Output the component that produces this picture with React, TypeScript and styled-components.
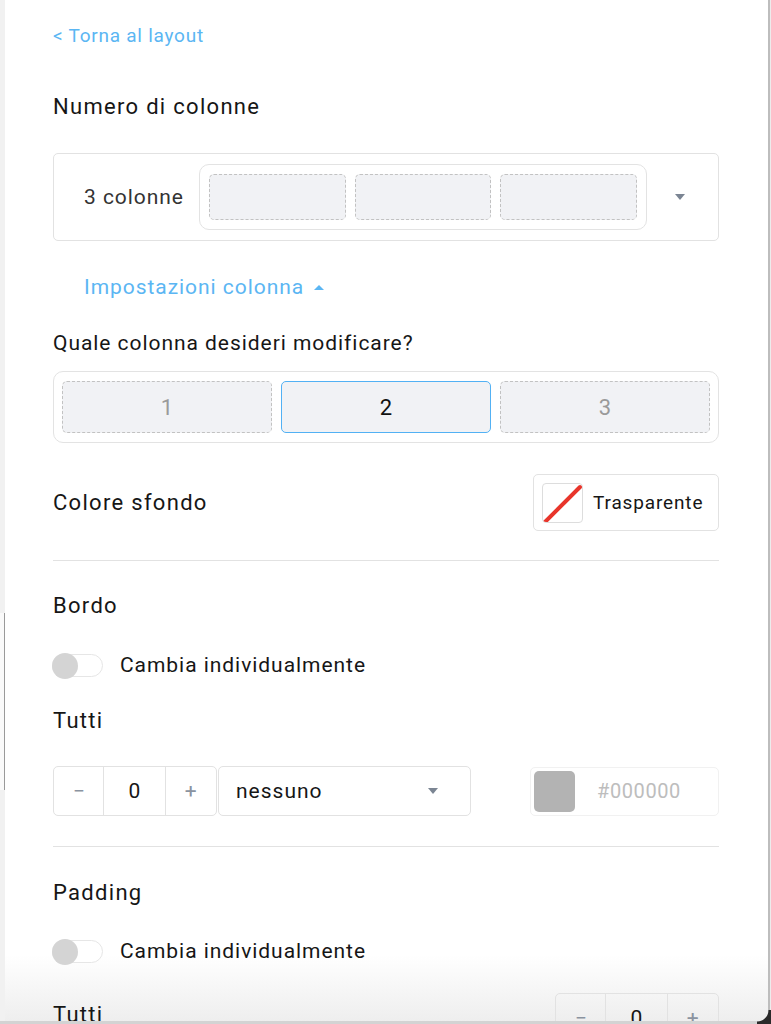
import React from "react";
import styled, { createGlobalStyle } from "styled-components";

const Global = createGlobalStyle`
  html, body { margin: 0; padding: 0; background: #ffffff; }
  body { font-family: Roboto, "Noto Sans", Arial, sans-serif; color: #1b1b1b; overflow: hidden; }
  * { box-sizing: border-box; }
`;

const Screen = styled.div`
  position: relative;
  display: flex;
  width: 771px;
  height: 1024px;
  overflow: hidden;
  background: linear-gradient(to bottom, #ffffff 0px, #ffffff 955px, #eeeeee 1021px);
`;

const LeftStrip = styled.div`
  width: 5px;
  flex-shrink: 0;
  display: flex;
  flex-direction: column;
  background: #f1f1f1;
`;

const LeftBehind = styled.div`
  margin-top: 613px;
  height: 177px;
  border-right: 1px solid #9a9a9a;
  background: #fafafa;
`;

const RightEdge = styled.div`
  width: 3px;
  flex-shrink: 0;
  border-left: 2px solid #bdbdbd;
  background: #ececec;
`;

const Panel = styled.div`
  flex: 1;
  display: flex;
  flex-direction: column;
  padding: 0 49px 0 48px;
  & > * { flex-shrink: 0; }
`;

const BackLink = styled.a`
  margin-top: 24px;
  line-height: 24px;
  font-size: 19px;
  letter-spacing: 0.75px;
  color: #5bb6f3;
  text-decoration: none;
`;

const Heading = styled.div<{ $mt: number }>`
  margin-top: ${(p) => p.$mt}px;
  line-height: 24px;
  font-size: 22px;
  letter-spacing: 1.3px;
  color: #161616;
`;

const Label = styled.div<{ $mt: number }>`
  margin-top: ${(p) => p.$mt}px;
  line-height: 24px;
  font-size: 21px;
  letter-spacing: 0.95px;
  color: #161616;
`;

const ColumnsBox = styled.div`
  margin-top: 34px;
  height: 88px;
  border: 1px solid #e2e2e2;
  border-radius: 5px;
  display: flex;
  align-items: center;
  padding-left: 30px;
`;

const ColumnsLabel = styled.span`
  width: 115px;
  font-size: 21px;
  letter-spacing: 0.95px;
  color: #333;
`;

const Preview = styled.div`
  width: 448px;
  height: 66px;
  border: 1px solid #e3e3e3;
  border-radius: 10px;
  padding: 9px;
  display: flex;
  gap: 9px;
`;

const PreviewCell = styled.div`
  flex: 1;
  border: 1px dashed #c2c2c2;
  border-radius: 5px;
  background: #f1f2f5;
`;

const Caret = styled.span<{ $up?: boolean; $ml?: number }>`
  display: inline-block;
  margin-left: ${(p) => p.$ml ?? 0}px;
  width: 0;
  height: 0;
  border-left: 5px solid transparent;
  border-right: 5px solid transparent;
  ${(p) =>
    p.$up
      ? "border-bottom: 5px solid currentColor;"
      : "border-top: 6px solid #7b8593;"}
`;

const ToggleLink = styled.div`
  margin-top: 34px;
  margin-left: 31px;
  line-height: 24px;
  font-size: 21px;
  letter-spacing: 0.95px;
  color: #5bb6f3;
  display: flex;
  align-items: center;
  gap: 10px;
`;

const Group = styled.div`
  margin-top: 16px;
  height: 72px;
  border: 1px solid #e3e3e3;
  border-radius: 10px;
  padding: 9px 8px;
  display: flex;
  gap: 9px;
`;

const ColButton = styled.div<{ $active?: boolean }>`
  flex: 1;
  display: flex;
  align-items: center;
  justify-content: center;
  border-radius: 5px;
  background: #f1f2f5;
  font-size: 22px;
  border: 1px ${(p) => (p.$active ? "solid #52b1f4" : "dashed #c2c2c2")};
  color: ${(p) => (p.$active ? "#111" : "#9a9a9a")};
`;

const Row = styled.div<{ $mt: number }>`
  margin-top: ${(p) => p.$mt}px;
  display: flex;
  align-items: center;
  justify-content: space-between;
`;

const TopRow = styled(Row)`
  align-items: flex-start;
`;

const ColorButton = styled.div`
  width: 186px;
  height: 57px;
  border: 1px solid #e2e2e2;
  border-radius: 5px;
  display: flex;
  align-items: center;
  padding-left: 8px;
  gap: 10px;
  font-size: 19px;
  letter-spacing: 0.85px;
  color: #161616;
`;

const Swatch = styled.div`
  width: 41px;
  height: 40px;
  border: 1px solid #dddddd;
  border-radius: 4px;
  overflow: hidden;
`;

const Divider = styled.div<{ $mt: number }>`
  margin-top: ${(p) => p.$mt}px;
  height: 1px;
  background: #e2e2e2;
`;

const SwitchRow = styled.div<{ $mt: number }>`
  margin-top: ${(p) => p.$mt}px;
  display: flex;
  align-items: center;
  gap: 17px;
  height: 26px;
  font-size: 21px;
  letter-spacing: 0.95px;
  color: #161616;
`;

const Track = styled.div`
  position: relative;
  width: 51px;
  height: 23px;
  border: 1px solid #e6e6e6;
  border-radius: 12px;
  background: #fff;
  margin-left: -1px;
`;

const Knob = styled.div`
  position: absolute;
  left: -1px;
  top: -2px;
  width: 26px;
  height: 26px;
  border-radius: 50%;
  background: #d4d4d4;
`;

const Controls = styled.div`
  margin-top: 33px;
  display: flex;
  align-items: center;
  height: 50px;
`;

const Stepper = styled.div`
  display: flex;
  width: 164px;
  height: 50px;
  border: 1px solid #e2e2e2;
  border-radius: 5px;
`;

const StepBtn = styled.div<{ $w: number; $last?: boolean }>`
  width: ${(p) => p.$w}px;
  display: flex;
  align-items: center;
  justify-content: center;
  font-size: 21px;
  color: #8a93a0;
  border-right: ${(p) => (p.$last ? "none" : "1px solid #e2e2e2")};
`;

const StepValue = styled(StepBtn)`
  color: #161616;
`;

const Select = styled.div`
  margin-left: 1px;
  width: 253px;
  height: 50px;
  border: 1px solid #e2e2e2;
  border-radius: 5px;
  display: flex;
  align-items: center;
  justify-content: space-between;
  padding: 0 32px 0 17px;
  font-size: 21px;
  letter-spacing: 1px;
  color: #161616;
`;

const HexInput = styled.div`
  margin-left: auto;
  width: 189px;
  height: 49px;
  border: 1px solid #f1f1f1;
  border-radius: 5px;
  display: flex;
  align-items: center;
  padding-left: 3px;
  gap: 22px;
  font-size: 20px;
  letter-spacing: 0.6px;
  color: #bdbdbd;
`;

const HexSwatch = styled.div`
  width: 41px;
  height: 41px;
  border-radius: 5px;
  background: #b3b3b3;
`;

const BottomBar = styled.div`
  position: absolute;
  left: 0;
  right: 0;
  bottom: 0;
  height: 3px;
  background: #d3d3d3;
`;

const Corner = styled.div`
  position: absolute;
  right: 0;
  bottom: 0;
  width: 14px;
  height: 14px;
  background: radial-gradient(circle at 0 0, transparent 11px, #2a2a2a 12px);
`;

export default function App() {
  return (
    <>
      <Global />
      <Screen>
        <LeftStrip>
          <LeftBehind />
        </LeftStrip>
        <Panel>
          <BackLink href="#">&lt; Torna al layout</BackLink>
          <Heading $mt={47}>Numero di colonne</Heading>
          <ColumnsBox>
            <ColumnsLabel>3 colonne</ColumnsLabel>
            <Preview>
              <PreviewCell />
              <PreviewCell />
              <PreviewCell />
            </Preview>
            <Caret $ml={28} />
          </ColumnsBox>
          <ToggleLink>
            Impostazioni colonna <Caret $up />
          </ToggleLink>
          <Label $mt={32}>Quale colonna desideri modificare?</Label>
          <Group>
            <ColButton>1</ColButton>
            <ColButton $active>2</ColButton>
            <ColButton>3</ColButton>
          </Group>
          <Row $mt={31}>
            <Heading $mt={0}>Colore sfondo</Heading>
            <ColorButton>
              <Swatch>
                <svg width="41" height="40" viewBox="0 0 41 40">
                  <line x1="2" y1="38" x2="37" y2="3" stroke="#e8352b" strokeWidth="4" strokeLinecap="round" />
                </svg>
              </Swatch>
              Trasparente
            </ColorButton>
          </Row>
          <Divider $mt={29} />
          <Heading $mt={33}>Bordo</Heading>
          <SwitchRow $mt={34}>
            <Track>
              <Knob />
            </Track>
            Cambia individualmente
          </SwitchRow>
          <Heading $mt={31}>Tutti</Heading>
          <Controls>
            <Stepper>
              <StepBtn $w={51}>−</StepBtn>
              <StepValue $w={62}>0</StepValue>
              <StepBtn $w={51} $last>+</StepBtn>
            </Stepper>
            <Select>
              nessuno
              <Caret />
            </Select>
            <HexInput>
              <HexSwatch />
              #000000
            </HexInput>
          </Controls>
          <Divider $mt={30} />
          <Heading $mt={34}>Padding</Heading>
          <SwitchRow $mt={33}>
            <Track>
              <Knob />
            </Track>
            Cambia individualmente
          </SwitchRow>
          <TopRow $mt={29}>
            <Heading $mt={10}>Tutti</Heading>
            <Stepper>
              <StepBtn $w={51}>−</StepBtn>
              <StepValue $w={62}>0</StepValue>
              <StepBtn $w={51} $last>+</StepBtn>
            </Stepper>
          </TopRow>
        </Panel>
        <RightEdge />
        <BottomBar />
        <Corner />
      </Screen>
    </>
  );
}
